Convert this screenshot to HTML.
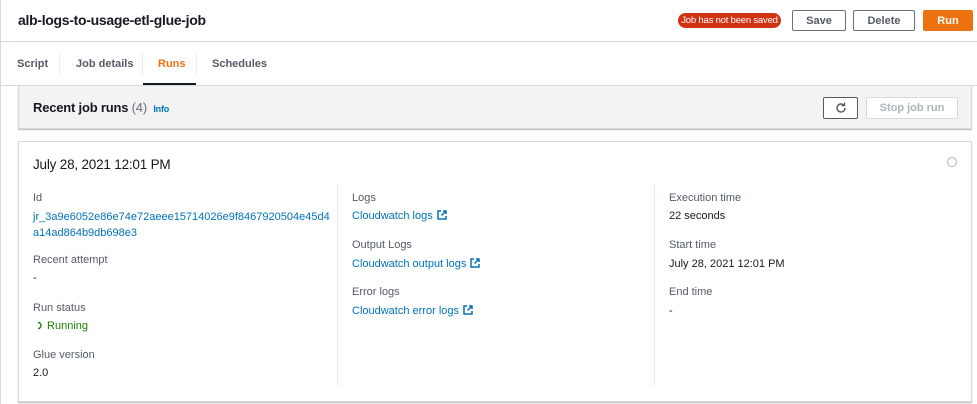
<!DOCTYPE html>
<html><head><style>
*{margin:0;padding:0;box-sizing:border-box}
body{width:977px;height:404px;background:#fff;font-family:"Liberation Sans",Arial,sans-serif;position:relative;overflow:hidden;color:#16191f}
.a{position:absolute;white-space:nowrap}
.lbl{font-size:11px;color:#545b64}
.val{font-size:11px;color:#16191f}
.lnk{font-size:11px;color:#0073bb}
.btn{position:absolute;border:1px solid #687078;border-radius:2px;background:#fff;font-size:11px;font-weight:bold;color:#545b64;text-align:center;line-height:20px}
.ext{display:inline-block;vertical-align:-1px;margin-left:4px}
.sep{position:absolute;width:1px;height:22px;background:#eaeded;top:53px}
</style></head><body>
<div class="a" style="left:0;top:0;width:1px;height:404px;background:#d5dbdb"></div>
<div class="a" style="left:18px;top:12px;font-size:14px;font-weight:bold;letter-spacing:-0.3px">alb-logs-to-usage-etl-glue-job</div>
<div class="a" style="left:678px;top:13px;width:103px;height:15px;background:#d13212;border-radius:8px;color:#fff;font-size:9.5px;text-align:center;line-height:15px;letter-spacing:-0.2px">Job has not been saved</div>
<div class="btn" style="left:792px;top:10px;width:54px;height:21px">Save</div>
<div class="btn" style="left:853px;top:10px;width:62px;height:21px">Delete</div>
<div class="btn" style="left:923px;top:10px;width:50px;height:21px;background:#ec7211;border-color:#ec7211;color:#fff">Run</div>
<div class="a" style="left:0;top:41px;width:977px;height:1px;background:#d5dbdb"></div>
<div class="a" style="left:17px;top:58px;font-size:11px;font-weight:bold;color:#545b64">Script</div>
<div class="sep" style="left:59px"></div>
<div class="a" style="left:76px;top:58px;font-size:11px;font-weight:bold;color:#545b64">Job details</div>
<div class="sep" style="left:142px"></div>
<div class="a" style="left:158px;top:58px;font-size:11px;font-weight:bold;color:#ec7211">Runs</div>
<div class="sep" style="left:196px"></div>
<div class="a" style="left:212px;top:58px;font-size:11px;font-weight:bold;color:#545b64">Schedules</div>
<div class="a" style="left:0;top:85px;width:977px;height:1px;background:#d5dbdb"></div>
<div class="a" style="left:143px;top:83px;width:53px;height:2px;background:#16191f"></div>
<div class="a" style="left:18px;top:86px;width:954px;height:43px;background:#f2f3f3;border:1px solid #d5dbdb;border-top:none;box-shadow:0 1px 1px rgba(0,28,36,.3)"></div>
<div class="a" style="left:33px;top:100px;font-size:13px;font-weight:bold;letter-spacing:-0.2px">Recent job runs <span style="font-weight:normal;color:#687078">(4)</span> <span style="font-size:9px;color:#0073bb;margin-left:3px">Info</span></div>
<div class="btn" style="left:823px;top:97px;width:35px;height:22px;background:#fff;border-color:#545b64">
<svg width="14" height="14" viewBox="0 0 14 14" style="margin-top:3px"><path d="M11 7a4 4 0 1 1-1.2-2.9" fill="none" stroke="#545b64" stroke-width="1.4"/><path d="M10.5 1.5v3h-3" fill="none" stroke="#545b64" stroke-width="1.4"/></svg></div>
<div class="btn" style="left:866px;top:97px;width:92px;height:22px;border-color:#d5dbdb;color:#aab7b8">Stop job run</div>
<div class="a" style="left:18px;top:141px;width:954px;height:261px;border:1px solid #d5dbdb;box-shadow:0 1px 1px rgba(0,28,36,.3)"></div>
<div class="a" style="left:33px;top:157px;font-size:13.5px;letter-spacing:-0.2px">July 28, 2021 12:01 PM</div>
<div class="a" style="left:947px;top:157px;width:10px;height:10px;border:1px solid #aab7b8;border-radius:50%"></div>
<div class="a" style="left:337px;top:183px;width:1px;height:203px;background:#eaeded"></div>
<div class="a" style="left:654px;top:183px;width:1px;height:203px;background:#eaeded"></div>
<div class="a lbl" style="left:33px;top:192px">Id</div>
<div class="a lnk" style="left:33px;top:209px;line-height:16px">jr_3a9e6052e86e74e72aeee15714026e9f8467920504e45d4<br>a14ad864b9db698e3</div>
<div class="a lbl" style="left:33px;top:254px">Recent attempt</div>
<div class="a val" style="left:33px;top:272px">-</div>
<div class="a lbl" style="left:33px;top:302px">Run status</div>
<div class="a" style="left:36px;top:320px;font-size:11px;color:#1d8102"><svg width="8" height="9" viewBox="0 0 8 9" style="vertical-align:-1px"><path d="M2 1.5a3 3 0 0 1 0 6" fill="none" stroke="#1d8102" stroke-width="1.4"/></svg> Running</div>
<div class="a lbl" style="left:33px;top:349px">Glue version</div>
<div class="a val" style="left:33px;top:367px">2.0</div>
<svg width="0" height="0" style="position:absolute"><defs><symbol id="e" viewBox="0 0 10 10"><path d="M4 1H1v8h8V6M6 1h3v3M9 1L4.5 5.5" fill="none" stroke="#0073bb" stroke-width="1.5"/></symbol></defs></svg>
<div class="a lbl" style="left:352px;top:192px">Logs</div>
<div class="a lnk" style="left:352px;top:210px">Cloudwatch logs<svg class="ext" width="10" height="10"><use href="#e"/></svg></div>
<div class="a lbl" style="left:352px;top:239px">Output Logs</div>
<div class="a lnk" style="left:352px;top:258px">Cloudwatch output logs<svg class="ext" width="10" height="10"><use href="#e"/></svg></div>
<div class="a lbl" style="left:352px;top:286px">Error logs</div>
<div class="a lnk" style="left:352px;top:305px">Cloudwatch error logs<svg class="ext" width="10" height="10"><use href="#e"/></svg></div>
<div class="a lbl" style="left:669px;top:192px">Execution time</div>
<div class="a val" style="left:669px;top:210px">22 seconds</div>
<div class="a lbl" style="left:669px;top:239px">Start time</div>
<div class="a val" style="left:669px;top:258px">July 28, 2021 12:01 PM</div>
<div class="a lbl" style="left:669px;top:286px">End time</div>
<div class="a val" style="left:669px;top:305px">-</div>
</body></html>
